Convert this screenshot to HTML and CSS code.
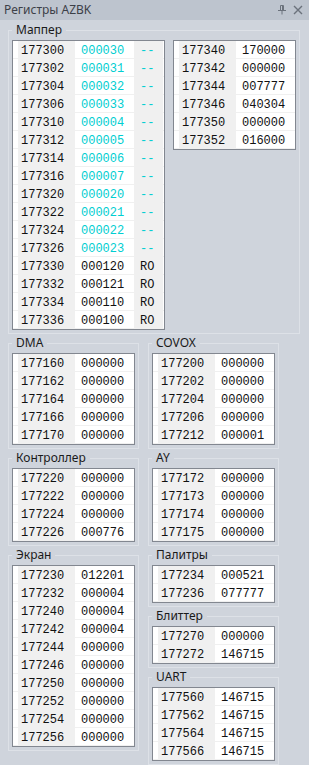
FILE: index.html
```html
<!DOCTYPE html>
<html lang="ru">
<head>
<meta charset="utf-8">
<title>Регистры AZBK</title>
<link rel="stylesheet" href="styles.css">
</head>
<body>
<div class="window">
  <div class="titlebar">
    <span class="title">Регистры AZBK</span>
    <span class="tools">
      <svg class="pin" width="10" height="10" viewBox="0 0 10 10"><path d="M3.5 0.5h3v5h-3z M5.5 0.5v5 M1 5.5h8 M5 5.5v4" fill="none" stroke="#6B727C" stroke-width="1"/></svg>
      <svg class="close" width="10" height="10" viewBox="0 0 10 10"><path d="M1 1L9 9M9 1L1 9" stroke="#6B727C" stroke-width="1.4" fill="none"/></svg>
    </span>
  </div>
  <div class="content">
    <fieldset class="group mapper">
      <legend>Маппер</legend>
      <div class="mapper-body">
        <div class="regs regs-wide">
          <div class="row"><i></i><span class="addr">177300</span><span class="val cyan">000030</span><span class="flag cyan">--</span></div>
          <div class="row"><i></i><span class="addr">177302</span><span class="val cyan">000031</span><span class="flag cyan">--</span></div>
          <div class="row"><i></i><span class="addr">177304</span><span class="val cyan">000032</span><span class="flag cyan">--</span></div>
          <div class="row"><i></i><span class="addr">177306</span><span class="val cyan">000033</span><span class="flag cyan">--</span></div>
          <div class="row"><i></i><span class="addr">177310</span><span class="val cyan">000004</span><span class="flag cyan">--</span></div>
          <div class="row"><i></i><span class="addr">177312</span><span class="val cyan">000005</span><span class="flag cyan">--</span></div>
          <div class="row"><i></i><span class="addr">177314</span><span class="val cyan">000006</span><span class="flag cyan">--</span></div>
          <div class="row"><i></i><span class="addr">177316</span><span class="val cyan">000007</span><span class="flag cyan">--</span></div>
          <div class="row"><i></i><span class="addr">177320</span><span class="val cyan">000020</span><span class="flag cyan">--</span></div>
          <div class="row"><i></i><span class="addr">177322</span><span class="val cyan">000021</span><span class="flag cyan">--</span></div>
          <div class="row"><i></i><span class="addr">177324</span><span class="val cyan">000022</span><span class="flag cyan">--</span></div>
          <div class="row"><i></i><span class="addr">177326</span><span class="val cyan">000023</span><span class="flag cyan">--</span></div>
          <div class="row"><i></i><span class="addr">177330</span><span class="val">000120</span><span class="flag">RO</span></div>
          <div class="row"><i></i><span class="addr">177332</span><span class="val">000121</span><span class="flag">RO</span></div>
          <div class="row"><i></i><span class="addr">177334</span><span class="val">000110</span><span class="flag">RO</span></div>
          <div class="row"><i></i><span class="addr">177336</span><span class="val">000100</span><span class="flag">RO</span></div>
        </div>
        <div class="regs">
          <div class="row"><i></i><span class="addr">177340</span><span class="val">170000</span></div>
          <div class="row"><i></i><span class="addr">177342</span><span class="val">000000</span></div>
          <div class="row"><i></i><span class="addr">177344</span><span class="val">007777</span></div>
          <div class="row"><i></i><span class="addr">177346</span><span class="val">040304</span></div>
          <div class="row"><i></i><span class="addr">177350</span><span class="val">000000</span></div>
          <div class="row"><i></i><span class="addr">177352</span><span class="val">016000</span></div>
        </div>
      </div>
    </fieldset>
    <div class="columns">
      <div class="col">
        <fieldset class="group">
          <legend>DMA</legend>
          <div class="regs">
            <div class="row"><i></i><span class="addr">177160</span><span class="val">000000</span></div>
            <div class="row"><i></i><span class="addr">177162</span><span class="val">000000</span></div>
            <div class="row"><i></i><span class="addr">177164</span><span class="val">000000</span></div>
            <div class="row"><i></i><span class="addr">177166</span><span class="val">000000</span></div>
            <div class="row"><i></i><span class="addr">177170</span><span class="val">000000</span></div>
          </div>
        </fieldset>
        <fieldset class="group">
          <legend>Контроллер</legend>
          <div class="regs">
            <div class="row"><i></i><span class="addr">177220</span><span class="val">000000</span></div>
            <div class="row"><i></i><span class="addr">177222</span><span class="val">000000</span></div>
            <div class="row"><i></i><span class="addr">177224</span><span class="val">000000</span></div>
            <div class="row"><i></i><span class="addr">177226</span><span class="val">000776</span></div>
          </div>
        </fieldset>
        <fieldset class="group">
          <legend>Экран</legend>
          <div class="regs">
            <div class="row"><i></i><span class="addr">177230</span><span class="val">012201</span></div>
            <div class="row"><i></i><span class="addr">177232</span><span class="val">000004</span></div>
            <div class="row"><i></i><span class="addr">177240</span><span class="val">000004</span></div>
            <div class="row"><i></i><span class="addr">177242</span><span class="val">000004</span></div>
            <div class="row"><i></i><span class="addr">177244</span><span class="val">000000</span></div>
            <div class="row"><i></i><span class="addr">177246</span><span class="val">000000</span></div>
            <div class="row"><i></i><span class="addr">177250</span><span class="val">000000</span></div>
            <div class="row"><i></i><span class="addr">177252</span><span class="val">000000</span></div>
            <div class="row"><i></i><span class="addr">177254</span><span class="val">000000</span></div>
            <div class="row"><i></i><span class="addr">177256</span><span class="val">000000</span></div>
          </div>
        </fieldset>
      </div>
      <div class="col">
        <fieldset class="group">
          <legend>COVOX</legend>
          <div class="regs">
            <div class="row"><i></i><span class="addr">177200</span><span class="val">000000</span></div>
            <div class="row"><i></i><span class="addr">177202</span><span class="val">000000</span></div>
            <div class="row"><i></i><span class="addr">177204</span><span class="val">000000</span></div>
            <div class="row"><i></i><span class="addr">177206</span><span class="val">000000</span></div>
            <div class="row"><i></i><span class="addr">177212</span><span class="val">000001</span></div>
          </div>
        </fieldset>
        <fieldset class="group">
          <legend>AY</legend>
          <div class="regs">
            <div class="row"><i></i><span class="addr">177172</span><span class="val">000000</span></div>
            <div class="row"><i></i><span class="addr">177173</span><span class="val">000000</span></div>
            <div class="row"><i></i><span class="addr">177174</span><span class="val">000000</span></div>
            <div class="row"><i></i><span class="addr">177175</span><span class="val">000000</span></div>
          </div>
        </fieldset>
        <fieldset class="group">
          <legend>Палитры</legend>
          <div class="regs">
            <div class="row"><i></i><span class="addr">177234</span><span class="val">000521</span></div>
            <div class="row"><i></i><span class="addr">177236</span><span class="val">077777</span></div>
          </div>
        </fieldset>
        <fieldset class="group">
          <legend>Блиттер</legend>
          <div class="regs">
            <div class="row"><i></i><span class="addr">177270</span><span class="val">000000</span></div>
            <div class="row"><i></i><span class="addr">177272</span><span class="val">146715</span></div>
          </div>
        </fieldset>
        <fieldset class="group">
          <legend>UART</legend>
          <div class="regs">
            <div class="row"><i></i><span class="addr">177560</span><span class="val">146715</span></div>
            <div class="row"><i></i><span class="addr">177562</span><span class="val">146715</span></div>
            <div class="row"><i></i><span class="addr">177564</span><span class="val">146715</span></div>
            <div class="row"><i></i><span class="addr">177566</span><span class="val">146715</span></div>
          </div>
        </fieldset>
      </div>
    </div>
  </div>
</div>
</body>
</html>
```
FILE: styles.css
```css
* { box-sizing: border-box; }
body {
  margin: 0;
  background: #CFD4DC;
  font-family: "Noto Sans", "Liberation Sans", sans-serif;
}
.window {
  width: 309px;
  height: 765px;
  background: #CFD4DC;
}
.titlebar {
  height: 20px;
  background: #BDC4CE;
  display: flex;
  align-items: center;
  justify-content: space-between;
  padding: 0 6px 0 4px;
}
.title {
  font-size: 12px;
  color: #3C4048;
  line-height: 16px;
}
.tools {
  display: flex;
  align-items: center;
  gap: 6px;
}
.tools svg { display: block; }
.content {
  padding: 2px 0 0 8px;
}
.group {
  margin: 0;
  padding: 2px 3px 3px 3px;
  border: 1px solid #DDE1E7;
  min-width: 0;
}
.group + .group { margin-top: 1px; }
.group legend {
  padding: 0 4px;
  margin-left: 0;
  font-size: 12px;
  line-height: 16px;
  color: #1A1A1A;
}
.mapper { width: 292px; }
.mapper-body {
  display: flex;
  align-items: flex-start;
  gap: 8px;
}
.columns {
  display: flex;
  align-items: flex-start;
  gap: 9px;
  margin-top: 1px;
}
.col {
  width: 131px;
  display: flex;
  flex-direction: column;
}
.regs {
  width: 123px;
  border: 1px solid #828790;
  background: #FFFFFF;
  font-family: "Liberation Mono", "Courier New", monospace;
  font-size: 12px;
  color: #111111;
}
.regs-wide { width: 153px; }
.row {
  display: flex;
  height: 18px;
  border-bottom: 1px solid #F0F0F0;
}
.row i { width: 5px; flex: none; }
.row span {
  display: block;
  height: 17px;
  padding-top: 4px;
  line-height: 13px;
  flex: none;
}
.addr {
  width: 57px;
  background: #F0F0F0;
  padding-left: 3px;
}
.val {
  width: 59px;
  padding-left: 6px;
}
.flag {
  width: 29px;
  background: #F0F0F0;
  padding-left: 6px;
}
.cyan { color: #00CED1; }
```
